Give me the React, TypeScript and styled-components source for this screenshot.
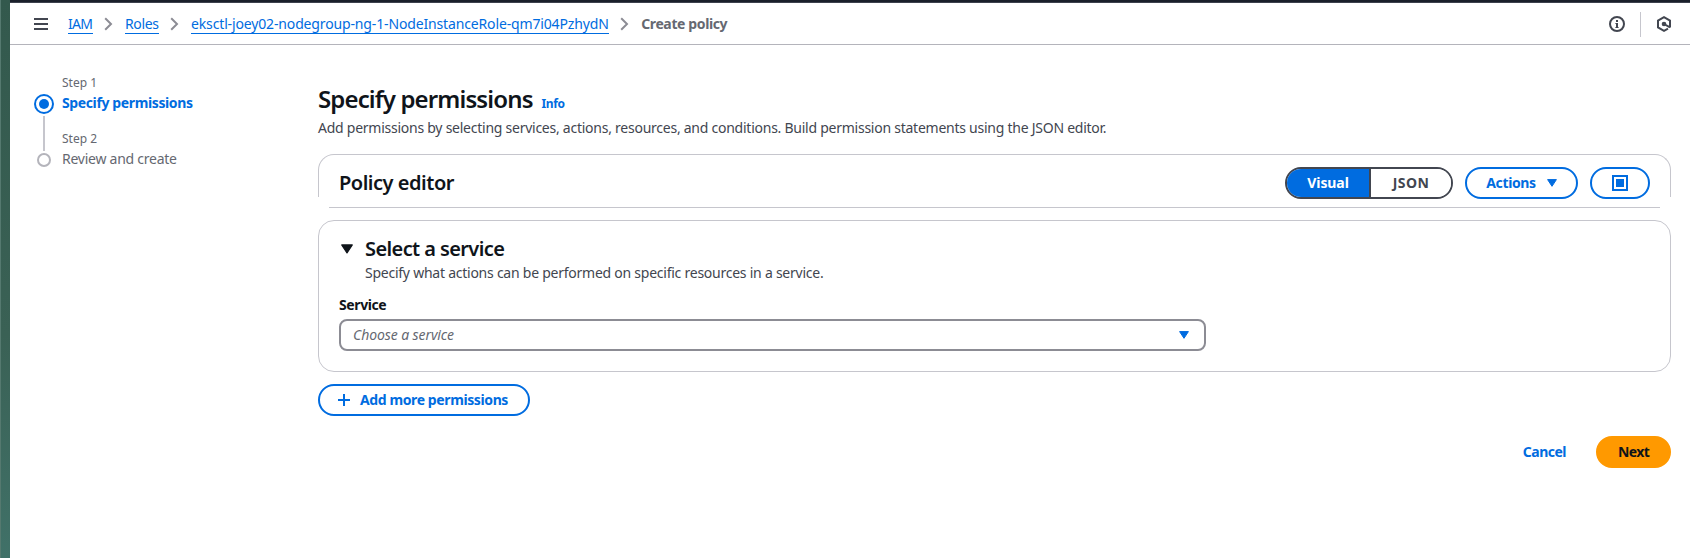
import React from 'react';
import styled, { createGlobalStyle } from 'styled-components';

const blue = '#006ce0';
const line = '#c6c6cd';

const GlobalStyle = createGlobalStyle`
  *, *::before, *::after { box-sizing: border-box; }
  body {
    margin: 0;
    background: #fff;
    color: #0f141a;
    font: 400 14px/20px "Noto Sans", "Open Sans", sans-serif;
    -webkit-font-smoothing: antialiased;
  }
`;

const Desktop = styled.div`
  display: flex;
  height: 558px;
  overflow: hidden;
`;

const Wallpaper = styled.div`
  flex: none;
  width: 10px;
  border-left: 1px solid #55796f;
  background: linear-gradient(#33594d, #3a6155 60%, #407168);
`;

const Window = styled.div`
  flex: 1;
  min-width: 0;
  border-top: 2px solid #1a1f2a;
`;

const TopBar = styled.header`
  display: flex;
  align-items: center;
  height: 43px;
  padding: 1px 18px 0 24px;
  border-top: 1px solid #3d414d;
  border-bottom: 1px solid #b4b4bb;
`;

const MenuButton = styled.button`
  display: grid;
  padding: 0;
  margin-right: 20px;
  border: 0;
  background: none;
  color: #424650;
`;

const Crumbs = styled.nav`
  display: flex;
  align-items: center;
  flex: 1;
`;

const Crumb = styled.a<{ $w: number; $ls: number }>`
  width: ${p => p.$w}px;
  height: 20px;
  border-bottom: 1px solid ${blue};
  color: ${blue};
  white-space: nowrap;
  letter-spacing: ${p => p.$ls}px;
`;

const Chevron = styled.svg`
  flex: none;
  margin: 0 11.75px;
`;

const Current = styled.span`
  color: #656871;
  font-weight: 700;
  letter-spacing: -0.38px;
`;

const BarRule = styled.span`
  width: 1px;
  height: 25px;
  margin: 0 15px;
  background: ${line};
`;

const Page = styled.div`
  display: flex;
`;

const Steps = styled.ol`
  flex: none;
  width: 308px;
  margin: 0;
  padding: 28px 0 0 24px;
  list-style: none;
`;

const Step = styled.li`
  display: grid;
  grid-template-columns: 20px 1fr;
  column-gap: 8px;
  height: 56px;
`;

const Track = styled.div`
  display: flex;
  flex-direction: column;
  align-items: center;
  padding-top: 21px;
`;

const Marker = styled.span<{ $active?: boolean }>`
  flex: none;
  display: grid;
  place-items: center;
  width: ${p => (p.$active ? 20 : 14)}px;
  height: ${p => (p.$active ? 20 : 14)}px;
  margin-top: ${p => (p.$active ? 0 : 3)}px;
  border: 2px solid ${p => (p.$active ? blue : '#b4b4bb')};
  border-radius: 50%;
  &::after {
    content: ${p => (p.$active ? '""' : 'none')};
    width: 10px;
    height: 10px;
    border-radius: 50%;
    background: ${blue};
  }
`;

const Connector = styled.span`
  flex: none;
  width: 2px;
  height: 35px;
  margin-top: 2px;
  background: ${line};
`;

const StepNumber = styled.div`
  height: 20px;
  color: #656871;
  font-size: 12px;
`;

const StepName = styled.div<{ $active?: boolean }>`
  color: ${p => (p.$active ? blue : '#656871')};
  font-weight: ${p => (p.$active ? 700 : 400)};
  letter-spacing: ${p => (p.$active ? -0.38 : -0.25)}px;
  white-space: nowrap;
`;

const Main = styled.main`
  width: 1353px;
  padding-top: 37px;
`;

const Title = styled.h1`
  display: flex;
  align-items: baseline;
  gap: 9px;
  margin: 0;
  height: 34px;
  font-size: 24px;
  line-height: 34px;
  font-weight: 600;
  letter-spacing: -0.87px;
`;

const InfoLink = styled.a`
  color: ${blue};
  font-size: 12px;
  font-weight: 700;
  letter-spacing: -0.4px;
`;

const Lead = styled.p`
  margin: 2px 0 0;
  height: 20px;
  color: #424650;
  white-space: nowrap;
  letter-spacing: -0.25px;
`;

const EditorBar = styled.section`
  display: flex;
  align-items: flex-start;
  height: 43px;
  margin-top: 16px;
  padding: 12px 20px 0;
  border: solid ${line};
  border-width: 1px 1px 0;
  border-radius: 16px 16px 0 0;
`;

const EditorRule = styled.div`
  height: 1px;
  margin: 10px 11px 0;
  background: ${line};
`;

const SectionTitle = styled.h2<{ $ls: number }>`
  margin: 0;
  font-size: 20px;
  line-height: 28px;
  font-weight: 600;
  white-space: nowrap;
  letter-spacing: ${p => p.$ls}px;
`;

const EditorTitle = styled(SectionTitle)`
  flex: 1;
  padding-top: 2px;
`;

const Segmented = styled.div`
  display: flex;
  width: 168px;
  height: 32px;
  margin-right: 12px;
  border: 2px solid #424650;
  border-radius: 16px;
  overflow: hidden;
`;

const Segment = styled.button<{ $on?: boolean }>`
  width: ${p => (p.$on ? 84 : 80)}px;
  flex: none;
  padding: 0;
  border: 0;
  border-right: ${p => (p.$on ? '2px solid #424650' : 0)};
  background: ${p => (p.$on ? blue : '#fff')};
  color: ${p => (p.$on ? '#fff' : '#424650')};
  font: 700 14px/20px "Noto Sans", sans-serif;
  letter-spacing: ${p => (p.$on ? -0.08 : 0.4)}px;
`;

const Pill = styled.button<{ $w: number; $ls?: number }>`
  display: flex;
  align-items: center;
  justify-content: center;
  width: ${p => p.$w}px;
  height: 32px;
  padding: 0;
  border: 2px solid ${blue};
  border-radius: 16px;
  background: #fff;
  color: ${blue};
  font: 700 14px/20px "Noto Sans", sans-serif;
  letter-spacing: ${p => p.$ls ?? 0}px;
  white-space: nowrap;
`;

const ActionsPill = styled(Pill)`
  gap: 11px;
  margin-right: 12px;
`;

const AddPill = styled(Pill)`
  gap: 10px;
  margin-top: 12px;
  padding-right: 2px;
`;

const ServicePanel = styled.section`
  height: 152px;
  margin-top: 12px;
  padding: 14px 20px 0;
  border: 1px solid ${line};
  border-radius: 16px;
`;

const ServiceHead = styled.div`
  display: flex;
  align-items: center;
  gap: 12px;
  height: 28px;
  padding-left: 2px;
`;

const ServiceNote = styled.p`
  margin: 0 0 0 26px;
  color: #424650;
  white-space: nowrap;
  letter-spacing: -0.245px;
`;

const FieldLabel = styled.label`
  display: block;
  margin: 12px 0 4px;
  font-weight: 700;
  letter-spacing: -0.4px;
`;

const SelectBox = styled.div`
  display: flex;
  align-items: center;
  justify-content: space-between;
  width: 867px;
  height: 32px;
  padding: 0 15px 0 12px;
  border: 2px solid #8c8c94;
  border-radius: 8px;
  color: ${blue};
`;

const Placeholder = styled.span`
  color: #656871;
  font-style: italic;
  letter-spacing: -0.09px;
`;

const Footer = styled.footer`
  display: flex;
  justify-content: flex-end;
  align-items: center;
  gap: 30px;
  margin-top: 20px;
`;

const CancelLink = styled.a`
  color: ${blue};
  font-weight: 700;
  letter-spacing: -0.5px;
`;

const NextPill = styled(Pill)`
  border-color: #ff9900;
  background: #ff9900;
  color: #0f141a;
`;

const Sep = () => (
  <Chevron width="9" height="14" viewBox="0 0 9 14" fill="none" stroke="#8c8c94" strokeWidth="2">
    <path d="M1.2 1.2 7 7l-5.8 5.8" />
  </Chevron>
);

const Caret = ({ w = 10, h = 8 }: { w?: number; h?: number }) => (
  <svg width={w} height={h} viewBox="0 0 10 8">
    <path d="M.6.6h8.8L5 7.3z" fill="currentColor" stroke="currentColor" strokeWidth="1" strokeLinejoin="round" />
  </svg>
);

export default function App() {
  return (
    <Desktop>
      <GlobalStyle />
      <Wallpaper />
      <Window>
        <TopBar>
          <MenuButton aria-label="Menu">
            <svg width="14" height="12" viewBox="0 0 14 12" fill="currentColor">
              <path d="M0 0h14v2H0zM0 5h14v2H0zM0 10h14v2H0z" />
            </svg>
          </MenuButton>
          <Crumbs>
            <Crumb $w={24.5} $ls={-0.7}>IAM</Crumb>
            <Sep />
            <Crumb $w={33.5} $ls={-0.38}>Roles</Crumb>
            <Sep />
            <Crumb $w={417.7} $ls={-0.145}>eksctl-joey02-nodegroup-ng-1-NodeInstanceRole-qm7i04PzhydN</Crumb>
            <Sep />
            <Current>Create policy</Current>
          </Crumbs>
          <svg width="16" height="16" viewBox="0 0 16 16" fill="none" stroke="#424650" strokeWidth="2">
            <circle cx="8" cy="8" r="7" />
            <path d="M7 4h2v2H7zM6.4 7H9v4h.6v1H6.4v-1H7V8h-.6z" fill="#424650" stroke="none" />
          </svg>
          <BarRule />
          <svg width="16" height="16" viewBox="0 0 16 16" fill="none" stroke="#424650" strokeWidth="2">
            <path d="M14 11.6V4.5L8 1.2 2 4.5v7l6 3.3 4-2.2" />
            <circle cx="8" cy="8" r="2.3" fill="#424650" stroke="none" />
            <path d="m8 8 6 3.4" />
          </svg>
        </TopBar>
        <Page>
          <Steps>
            <Step>
              <Track>
                <Marker $active />
                <Connector />
              </Track>
              <div>
                <StepNumber>Step 1</StepNumber>
                <StepName $active>Specify permissions</StepName>
              </div>
            </Step>
            <Step>
              <Track>
                <Marker />
              </Track>
              <div>
                <StepNumber>Step 2</StepNumber>
                <StepName>Review and create</StepName>
              </div>
            </Step>
          </Steps>
          <Main>
            <Title>
              Specify permissions <InfoLink>Info</InfoLink>
            </Title>
            <Lead>
              Add permissions by selecting services, actions, resources, and conditions. Build permission statements using the JSON editor.
            </Lead>
            <EditorBar>
              <EditorTitle $ls={-0.475}>Policy editor</EditorTitle>
              <Segmented>
                <Segment $on>Visual</Segment>
                <Segment>JSON</Segment>
              </Segmented>
              <ActionsPill $w={113} $ls={-0.36}>
                Actions <Caret />
              </ActionsPill>
              <Pill $w={60} aria-label="Toggle panel">
                <svg width="16" height="16" viewBox="0 0 16 16">
                  <rect x="1" y="1" width="14" height="14" fill="none" stroke="currentColor" strokeWidth="2" />
                  <rect x="4" y="4" width="8" height="8" fill="currentColor" />
                </svg>
              </Pill>
            </EditorBar>
            <EditorRule />
            <ServicePanel>
              <ServiceHead>
                <Caret w={12} h={10} />
                <SectionTitle $ls={-0.6}>Select a service</SectionTitle>
              </ServiceHead>
              <ServiceNote>Specify what actions can be performed on specific resources in a service.</ServiceNote>
              <FieldLabel>Service</FieldLabel>
              <SelectBox>
                <Placeholder>Choose a service</Placeholder>
                <Caret />
              </SelectBox>
            </ServicePanel>
            <AddPill $w={212} $ls={-0.39}>
              <svg width="12" height="12" viewBox="0 0 12 12" stroke="currentColor" strokeWidth="2">
                <path d="M6 0v12M0 6h12" />
              </svg>
              Add more permissions
            </AddPill>
            <Footer>
              <CancelLink>Cancel</CancelLink>
              <NextPill $w={75} $ls={-0.6}>Next</NextPill>
            </Footer>
          </Main>
        </Page>
      </Window>
    </Desktop>
  );
}
